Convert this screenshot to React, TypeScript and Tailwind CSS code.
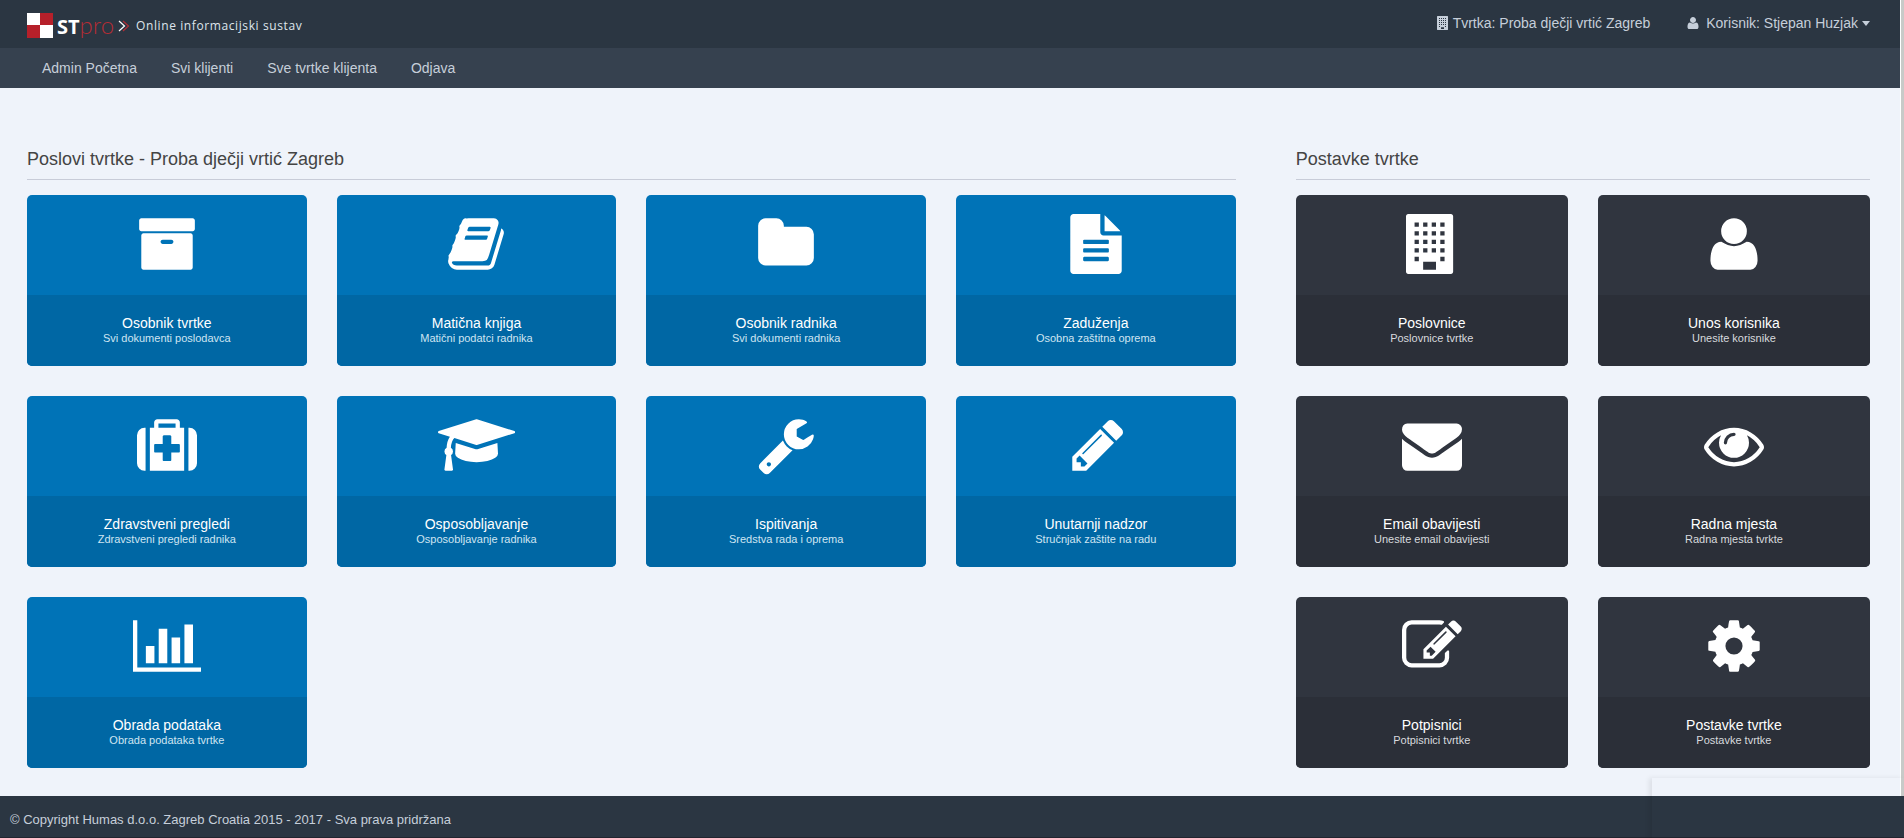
import type { ReactNode } from "react";

type IconName =
  | "archive"
  | "book"
  | "folder"
  | "file"
  | "medkit"
  | "graduation"
  | "wrench"
  | "pencil"
  | "chart"
  | "building"
  | "user"
  | "envelope"
  | "eye"
  | "edit"
  | "cog";

interface Tile {
  icon: IconName;
  title: string;
  subtitle: string;
}

// width is in the same units as the 1792 high glyph box
const ICONS: Record<IconName, { width: number; path: string }> = {
  archive: {
    width: 1792,
    path: "M1088 832q0-26-19-45t-45-19h-256q-26 0-45 19t-19 45 19 45 45 19h256q26 0 45-19t19-45zm576-192v960q0 26-19 45t-45 19h-1408q-26 0-45-19t-19-45v-960q0-26 19-45t45-19h1408q26 0 45 19t19 45zm64-448v256q0 26-19 45t-45 19h-1536q-26 0-45-19t-19-45v-256q0-26 19-45t45-19h1536q26 0 45 19t19 45z",
  },
  book: {
    width: 1792,
    path: "M1703 478q40 57 18 129l-275 906q-19 64-76.5 107.5t-122.5 43.5h-923q-77 0-148.5-53.5t-99.5-131.5q-24-67-2-127 0-4 3-27t4-37q1-8-3-21.5t-3-19.5q2-11 8-21t16.5-23.5 16.5-23.5q23-38 45-91.5t30-91.5q3-10 .5-30t-.5-28q3-11 17-28t17-23q21-36 42-92t25-90q1-9-2.5-32t.5-28q4-13 22-30.5t22-22.5q19-26 42.5-84.5t27.5-96.5q1-8-3-25.5t-2-26.5q2-8 9-18t18-23 17-21q8-12 16.5-30.5t15-35 16-36 19.5-32 26.5-23.5 36-11.5 47.5 5.5l-1 3q38-9 51-9h761q74 0 114 56t18 130l-274 906q-36 119-71.5 153.5t-128.5 34.5h-869q-27 0-38 15-11 16-1 43 24 70 144 70h923q29 0 56-15.5t35-41.5l300-987q7-22 5-57 38 15 59 43zm-1064 2q-4 13 2 22.5t20 9.5h608q13 0 25.5-9.5t16.5-22.5l21-64q4-13-2-22.5t-20-9.5h-608q-13 0-25.5 9.5t-16.5 22.5zm-83 256q-4 13 2 22.5t20 9.5h608q13 0 25.5-9.5t16.5-22.5l21-64q4-13-2-22.5t-20-9.5h-608q-13 0-25.5 9.5t-16.5 22.5z",
  },
  folder: {
    width: 1792,
    path: "M1728 608v704q0 92-66 158t-158 66h-1216q-92 0-158-66t-66-158v-960q0-92 66-158t158-66h320q92 0 158 66t66 158v32h672q92 0 158 66t66 158z",
  },
  file: {
    width: 1792,
    path: "M1596 476q14 14 28 36h-472v-472q22 14 36 28zm-476 164h544v1056q0 40-28 68t-68 28h-1344q-40 0-68-28t-28-68v-1600q0-40 28-68t68-28h800v544q0 40 28 68t68 28zm160 736v-64q0-14-9-23t-23-9h-704q-14 0-23 9t-9 23v64q0 14 9 23t23 9h704q14 0 23-9t9-23zm0-256v-64q0-14-9-23t-23-9h-704q-14 0-23 9t-9 23v64q0 14 9 23t23 9h704q14 0 23-9t9-23zm0-256v-64q0-14-9-23t-23-9h-704q-14 0-23 9t-9 23v64q0 14 9 23t23 9h704q14 0 23-9t9-23z",
  },
  medkit: {
    width: 1792,
    path: "M1280 1088v-192q0-14-9-23t-23-9h-224v-224q0-14-9-23t-23-9h-192q-14 0-23 9t-9 23v224h-224q-14 0-23 9t-9 23v192q0 14 9 23t23 9h224v224q0 14 9 23t23 9h192q14 0 23-9t9-23v-224h224q14 0 23-9t9-23zm-640-704h512v-128h-512v128zm-384 0v1280h-32q-92 0-158-66t-66-158v-832q0-92 66-158t158-66h32zm1152 0v1280h-1024v-1280h128v-160q0-40 28-68t68-28h576q40 0 68 28t28 68v160h128zm384 224v832q0 92-66 158t-158 66h-32v-1280h32q92 0 158 66t66 158z",
  },
  graduation: {
    width: 2304,
    path: "M1774 836l18 316q4 69-82 128t-235 93.5-323 34.5-323-34.5-235-93.5-82-128l18-316 574 181q22 7 48 7t48-7zm530-324q0 23-22 31l-1120 352q-4 1-10 1t-10-1l-652-206q-43 34-71 111.5t-34 178.5q63 36 63 109 0 69-58 107l58 433q2 14-8 25-9 11-24 11h-192q-15 0-24-11-10-11-8-25l58-433q-58-38-58-107 0-73 65-111 11-207 98-330l-333-104q-22-8-22-31t22-31l1120-352q4-1 10-1t10 1l1120 352q22 8 22 31z",
  },
  wrench: {
    width: 1792,
    path: "M448 1472q0-26-19-45t-45-19-45 19-19 45 19 45 45 19 45-19 19-45zm644-420l-682 682q-37 37-90 37-52 0-91-37l-106-108q-38-36-38-90 0-53 38-91l681-681q39 98 114.5 173.5t173.5 114.5zm634-435q0 39-23 106-47 134-164.5 217.5t-258.5 83.5q-185 0-316.5-131.5t-131.5-316.5 131.5-316.5 316.5-131.5q58 0 121.5 16.5t107.5 46.5q16 11 16 28t-16 28l-293 169v224l193 107q5-3 79-48.5t135.5-81 70.5-35.5q15 0 23.5 10t8.5 25z",
  },
  pencil: {
    width: 1664,
    path: "M491 1536l91-91-235-235-91 91v107h128v128h107zm523-928q0-22-22-22-10 0-17 7l-542 542q-7 7-7 17 0 22 22 22 10 0 17-7l542-542q7-7 7-17zm-54-192l416 416-832 832h-416v-416zm683 96q0 53-37 90l-166 166-416-416 166-165q36-38 90-38 53 0 91 38l235 234q37 39 37 91z",
  },
  chart: {
    width: 2048,
    path: "M640 896v512h-256v-512h256zm384-512v1024h-256v-1024h256zm1024 1152v128h-2048v-1536h128v1408h1920zm-640-896v768h-256v-768h256zm384-384v1152h-256v-1152h256z",
  },
  building: {
    width: 1536,
    path: "M1344 0q26 0 45 19t19 45v1664q0 26-19 45t-45 19h-1280q-26 0-45-19t-19-45v-1664q0-26 19-45t45-19zM256 256v128h128v-128zM512 256v128h128v-128zM768 256v128h128v-128zM1024 256v128h128v-128zM256 512v128h128v-128zM512 512v128h128v-128zM768 512v128h128v-128zM1024 512v128h128v-128zM256 768v128h128v-128zM512 768v128h128v-128zM768 768v128h128v-128zM1024 768v128h128v-128zM256 1024v128h128v-128zM512 1024v128h128v-128zM768 1024v128h128v-128zM1024 1024v128h128v-128zM256 1280v128h128v-128zM1024 1280v128h128v-128zM512 1424v240h384v-240z",
  },
  user: {
    width: 1792,
    path: "M1600 1399q0 109-62.5 187t-150.5 78h-982q-88 0-150.5-78t-62.5-187q0-85 8.5-160.5t31.5-152 58.5-131 94-89 134.5-34.5q195 128 377 128t377-128q76 0 134.5 34.5t94 89 58.5 131 31.5 152 8.5 160.5zm-320-887q0 159-112.5 271.5t-271.5 112.5-271.5-112.5-112.5-271.5 112.5-271.5 271.5-112.5 271.5 112.5 112.5 271.5z",
  },
  envelope: {
    width: 1792,
    path: "M1792 710v794q0 66-47 113t-113 47h-1472q-66 0-113-47t-47-113v-794q44 49 101 87 362 246 497 345 57 42 92.5 65.5t94.5 48 110 24.5h2q51 0 110-24.5t94.5-48 92.5-65.5q170-123 498-345 57-39 100-87zm0-294q0 79-49 151t-122 123q-376 261-468 325-10 7-42.5 31t-54 38.5-52 32.5-57.5 27-50 9h-2q-23 0-50-9t-57.5-27-52-32.5-54-38.5-42.5-31q-91-64-262-182.5t-205-142.5q-62-42-117-115.5t-55-136.5q0-78 41.5-130t118.5-52h1472q65 0 112.5 47t47.5 113z",
  },
  eye: {
    width: 1792,
    path: "M1664 960q-152-236-381-353 61 104 61 225 0 185-131.5 316.5t-316.5 131.5-316.5-131.5-131.5-316.5q0-121 61-225-229 117-381 353 133 205 333.5 326.5t434.5 121.5 434.5-121.5 333.5-326.5zm-720-384q0-20-14-34t-34-14q-125 0-214.5 89.5t-89.5 214.5q0 20 14 34t34 14 34-14 14-34q0-86 61-147t147-61q20 0 34-14t14-34zm848 384q0 34-20 69-140 230-376.5 368.5t-499.5 138.5-499.5-139-376.5-368q-20-35-20-69t20-69q140-229 376.5-368t499.5-139 499.5 139 376.5 368q20 35 20 69z",
  },
  edit: {
    width: 1792,
    path: "M888 1184l116-116-152-152-116 116v56h96v96h56zm440-720q-16-16-33 1l-350 350q-17 17-1 33t33-1l350-350q17-17 1-33zm80 594v190q0 119-84.5 203.5t-203.5 84.5h-832q-119 0-203.5-84.5t-84.5-203.5v-832q0-119 84.5-203.5t203.5-84.5h832q63 0 117 25 15 7 18 23 3 17-9 29l-49 49q-14 14-32 8-23-6-45-6h-832q-66 0-113 47t-47 113v832q0 66 47 113t113 47h832q66 0 113-47t47-113v-126q0-13 9-22l64-64q15-15 35-7t20 29zm-96-738l288 288-672 672h-288v-288zm444 132l-92 92-288-288 92-92q28-28 68-28t68 28l152 152q28 28 28 68t-28 68z",
  },
  cog: {
    width: 1792,
    path: "M1152 896q0-106-75-181t-181-75-181 75-75 181 75 181 181 75 181-75 75-181zm512-109v222q0 12-8 23t-20 13l-185 28q-19 54-39 91 35 50 107 138 10 12 10 25t-9 23q-27 37-99 108t-94 71q-12 0-26-9l-138-108q-44 23-91 38-16 136-29 186-7 28-36 28h-222q-14 0-24.5-8.5t-11.5-21.5l-28-184q-49-16-90-37l-141 107q-10 9-25 9-14 0-25-11-126-114-165-168-7-10-7-23 0-12 8-23 15-21 51-66.5t54-70.5q-27-50-41-99l-183-27q-13-2-21-12.5t-8-23.5v-222q0-12 8-23t19-13l186-28q14-46 39-92-40-57-107-138-10-12-10-24 0-10 9-23 26-36 98.5-107.5t94.5-71.5q13 0 26 10l138 107q44-23 91-38 16-136 29-186 7-28 36-28h222q14 0 24.5 8.5t11.5 21.5l28 184q49 16 90 37l142-107q9-9 24-9 13 0 25 10 129 119 165 170 7 8 7 22 0 12-8 23-15 21-51 66.5t-54 70.5q26 50 41 98l183 28q13 2 21 12.5t8 23.5z",
  },
};

const NAV_ITEMS = ["Admin Početna", "Svi klijenti", "Sve tvrtke klijenta", "Odjava"];

const JOB_TILES: Tile[] = [
  { icon: "archive", title: "Osobnik tvrtke", subtitle: "Svi dokumenti poslodavca" },
  { icon: "book", title: "Matična knjiga", subtitle: "Matični podatci radnika" },
  { icon: "folder", title: "Osobnik radnika", subtitle: "Svi dokumenti radnika" },
  { icon: "file", title: "Zaduženja", subtitle: "Osobna zaštitna oprema" },
  { icon: "medkit", title: "Zdravstveni pregledi", subtitle: "Zdravstveni pregledi radnika" },
  { icon: "graduation", title: "Osposobljavanje", subtitle: "Osposobljavanje radnika" },
  { icon: "wrench", title: "Ispitivanja", subtitle: "Sredstva rada i oprema" },
  { icon: "pencil", title: "Unutarnji nadzor", subtitle: "Stručnjak zaštite na radu" },
  { icon: "chart", title: "Obrada podataka", subtitle: "Obrada podataka tvrtke" },
];

const SETTINGS_TILES: Tile[] = [
  { icon: "building", title: "Poslovnice", subtitle: "Poslovnice tvrtke" },
  { icon: "user", title: "Unos korisnika", subtitle: "Unesite korisnike" },
  { icon: "envelope", title: "Email obavijesti", subtitle: "Unesite email obavijesti" },
  { icon: "eye", title: "Radna mjesta", subtitle: "Radna mjesta tvrkte" },
  { icon: "edit", title: "Potpisnici", subtitle: "Potpisnici tvrtke" },
  { icon: "cog", title: "Postavke tvrtke", subtitle: "Postavke tvrtke" },
];

function Icon({ name, className }: { name: IconName; className: string }) {
  const { width, path } = ICONS[name];
  return (
    <svg
      viewBox={`0 0 ${width} 1792`}
      className={`w-auto shrink-0 ${className}`}
      fill="currentColor"
      fillRule="evenodd"
      aria-hidden="true"
    >
      <path d={path} />
    </svg>
  );
}

function Logo() {
  return (
    <a href="#" className="flex items-center pt-[3px]">
      <svg viewBox="0 0 26 25" className="h-[25px] w-[26px]" aria-hidden="true">
        <path fill="#fff" d="M0 0h26v25H0z" />
        <path fill="#b6202a" d="M13 0h13v12H13zM0 12h13v13H0z" />
      </svg>
      <span className="ml-1 flex items-baseline leading-6">
        <span className="font-['Open_Sans',sans-serif] text-xl leading-6 font-bold text-white">ST</span>
        <span className="font-[Lato,sans-serif] text-2xl leading-6 font-light text-[#b32d35]">pro</span>
      </span>
      <svg viewBox="0 0 12 12" className="ml-1 h-3 w-3" fill="none" strokeWidth="1.2" aria-hidden="true">
        <path stroke="#b32d35" d="M5 1l5.500 5-5.500 5" />
        <path stroke="#fff" d="M1 1l5.500 5-5.500 5" />
      </svg>
      <span className="ml-1.5 font-['Open_Sans',sans-serif] text-xs tracking-wider text-[#dfe5ec]">
        Online informacijski sustav
      </span>
    </a>
  );
}

function TileCard({ tile, dark }: { tile: Tile; dark?: boolean }) {
  return (
    <a
      href="#"
      className={`block overflow-hidden rounded-[5px] text-center ${dark ? "bg-[#30353f]" : "bg-[#0073b7]"}`}
    >
      <div className="flex h-[100px] justify-center pt-[19px] text-white">
        <Icon name={tile.icon} className="h-[60px]" />
      </div>
      <div
        className={`flex h-[71px] flex-col items-center justify-center pb-0.5 ${dark ? "bg-[#2b2f38]" : "bg-[#0067a4]"}`}
      >
        <span className="text-sm leading-4 text-white">{tile.title}</span>
        <span className={`text-[11px] leading-[14px] ${dark ? "text-[#d8dade]" : "text-[#cfe5f2]"}`}>
          {tile.subtitle}
        </span>
      </div>
    </a>
  );
}

function Section({ title, className, children }: { title: string; className?: string; children: ReactNode }) {
  return (
    <section className={className}>
      <h2 className="mb-[15px] border-b border-[#c8ccd8] pb-2 text-lg leading-6 text-[#444]">{title}</h2>
      {children}
    </section>
  );
}

export default function App() {
  return (
    <div className="flex min-h-screen flex-col bg-[#eff3fa] font-['Liberation_Sans',Arial,sans-serif] text-sm">
      <div className="flex">
        <div className="min-w-0 flex-1">
          <header className="flex h-12 items-center justify-between bg-[#2b3642] pr-[30px] pl-[27px] text-[#c6cfda]">
            <Logo />
            <div className="flex items-center gap-9 pb-0.5">
              <a href="#" className="flex items-center gap-1">
                <Icon name="building" className="h-3.5" />
                Tvrtka: Proba dječji vrtić Zagreb
              </a>
              <button type="button" className="flex items-center gap-1.5">
                <Icon name="user" className="h-3.5" />
                <span className="flex items-center gap-1">
                  Korisnik: Stjepan Huzjak
                  <svg viewBox="0 0 8 5" className="h-[5px] w-2" fill="currentColor" aria-hidden="true">
                    <path d="M0 0h8L4 5z" />
                  </svg>
                </span>
              </button>
            </div>
          </header>

          <nav className="flex h-10 items-center gap-[34px] bg-[#36414f] pl-[42px] text-[#c6cfda]">
            {NAV_ITEMS.map((item) => (
              <a key={item} href="#">
                {item}
              </a>
            ))}
          </nav>

          <main className="grid grid-cols-3 gap-[60px] pt-[59px] pr-[30px] pb-7 pl-[27px]">
            <Section title="Poslovi tvrtke - Proba dječji vrtić Zagreb" className="col-span-2">
              <div className="grid grid-cols-4 gap-[30px]">
                {JOB_TILES.map((tile) => (
                  <TileCard key={tile.title} tile={tile} />
                ))}
              </div>
            </Section>

            <Section title="Postavke tvrtke">
              <div className="grid grid-cols-2 gap-[30px]">
                {SETTINGS_TILES.map((tile) => (
                  <TileCard key={tile.title} tile={tile} dark />
                ))}
              </div>
            </Section>
          </main>
        </div>

        {/* Scroll track */}
        <div className="w-1 border-l border-white bg-[#c8cac8]" />
      </div>

      <footer className="flex-1 border-b border-[#22252f] bg-[#2b3642] px-2.5 pt-4 pb-2 text-[13px] leading-4 text-[#c6cfda]">
        © Copyright Humas d.o.o. Zagreb Croatia 2015 - 2017 - Sva prava pridržana
      </footer>

      {/* Empty toast holder, only its edge shadow shows */}
      <div className="pointer-events-none fixed right-0 bottom-0 h-[60px] w-[252px] shadow-[-3px_0_5px_rgba(0,0,0,0.08)]" />
    </div>
  );
}
